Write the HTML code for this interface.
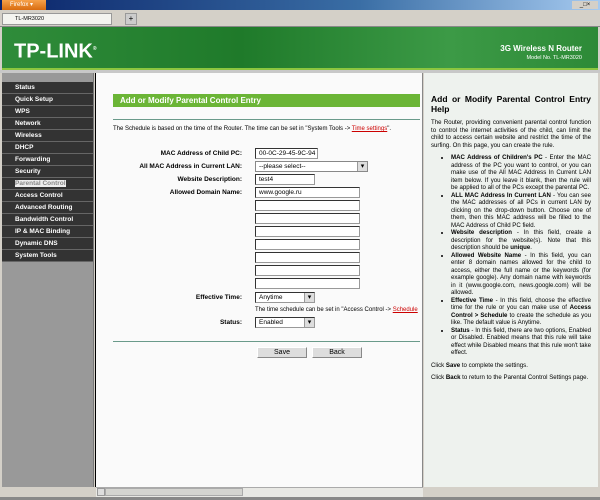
<!DOCTYPE html>
<html><head><style>
*{margin:0;padding:0;box-sizing:border-box}
body{width:600px;height:500px;overflow:hidden;position:relative;background:#d4d0c8;font-family:"Liberation Sans",Arial,sans-serif;font-size:7px;color:#000}
.a{position:absolute}
.menu div{height:12px;line-height:11px;color:#fff;font-weight:bold;font-size:6.5px;padding-left:13px;background:#333;border-bottom:1px solid #666}
.lbl{position:absolute;right:358px;font-weight:bold;font-size:6.5px;text-align:right;white-space:nowrap}
.in{position:absolute;left:255px;height:11px;background:#fff;border:1px solid #999;border-top-color:#333;border-left-color:#333;font-size:6.5px;line-height:9px;padding-left:3px}
.sel::after{content:"▾";position:absolute;right:0;top:0;width:9px;height:9px;background:#ddd;font-size:7px;text-align:center;line-height:9px;border-left:1px solid #999}
.help p{margin-bottom:5px}
.help ul{margin:0 0 5px 20px;list-style:disc}
.help li{text-align:justify}
.btn{position:absolute;top:347px;height:11px;background:#ddd;border:1px solid #888;border-top-color:#fff;border-left-color:#fff;font-size:7px;text-align:center;line-height:9px}
</style></head><body>
<div class="a" style="left:0;top:0;width:600px;height:10px;background:linear-gradient(90deg,#0a246a,#3a6ea5 60%,#a6caf0)"></div>
<div class="a" style="left:2px;top:0;width:44px;height:10px;background:linear-gradient(#f6a24a,#d86c10);color:#fff;font-size:6px;line-height:10px;padding-left:8px">Firefox ▾</div>
<div class="a" style="left:572px;top:1px;width:26px;height:8px;background:#d4d0c8;font-size:6px;line-height:8px;text-align:center">_□×</div>
<div class="a" style="left:0;top:10px;width:600px;height:17px;background:#d4d0c8;border-bottom:1px solid #888"></div>
<div class="a" style="left:2px;top:13px;width:110px;height:12px;background:#f4f4f0;border:1px solid #999;font-size:5.5px;line-height:10px;padding-left:12px">TL-MR3020</div>
<div class="a" style="left:125px;top:13px;width:12px;height:12px;background:#ccc;border:1px solid #999;font-size:8px;line-height:10px;text-align:center">+</div>
<div class="a" style="left:2px;top:27px;width:596px;height:43px;background:linear-gradient(90deg,#2f8c3a,#1f7a2a 40%,#3c9a46 75%,#2d8a37);border-bottom:2px solid #8cc63f"></div>
<div class="a" style="left:14px;top:38px;color:#fff;font-size:20px;font-weight:bold;letter-spacing:0;line-height:22px">TP-LINK<sup style="font-size:5px">®</sup></div>
<div class="a" style="left:460px;top:44px;width:122px;text-align:right;color:#fff;font-size:8px;font-weight:bold">3G Wireless N Router</div>
<div class="a" style="left:460px;top:55px;width:122px;text-align:right;color:#fff;font-size:5.5px">Model No. TL-MR3020</div>
<div class="a" style="left:0;top:70px;width:600px;height:3px;background:#c8c8c8"></div>
<div class="a" style="left:2px;top:73px;width:92px;height:414px;background:#999;border-right:1px solid #777"></div>
<div class="a menu" style="left:2px;top:82px;width:91px">
<div>Status</div><div>Quick Setup</div><div>WPS</div><div>Network</div><div>Wireless</div><div>DHCP</div><div>Forwarding</div><div>Security</div><div style="color:#999"><span style="background:#eee;color:#888">Parental Control</span></div><div>Access Control</div><div>Advanced Routing</div><div>Bandwidth Control</div><div>IP &amp; MAC Binding</div><div>Dynamic DNS</div><div>System Tools</div>
</div>
<div class="a" style="left:95px;top:73px;width:328px;height:414px;background:#fafafa;border-left:1px solid #000;border-right:1px solid #888"></div>
<div class="a" style="left:113px;top:94px;width:307px;height:13px;background:#6bb536;color:#fff;font-weight:bold;font-size:8px;line-height:13px;padding-left:7px">Add or Modify Parental Control Entry</div>
<div class="a" style="left:113px;top:119px;width:307px;height:1px;background:#6a9a8a"></div>
<div class="a" style="left:113px;top:126px;font-size:6px;white-space:nowrap">The Schedule is based on the time of the Router. The time can be set in "System Tools -&gt; <span style="color:#c00;text-decoration:underline">Time settings</span>".</div>
<div class="lbl" style="top:150px">MAC Address of Child PC:</div>
<div class="lbl" style="top:163px">All MAC Address in Current LAN:</div>
<div class="lbl" style="top:176px">Website Description:</div>
<div class="lbl" style="top:189px">Allowed Domain Name:</div>
<div class="in" style="top:148px;width:63px">00-0C-29-45-9C-94</div>
<div class="in sel" style="top:161px;width:113px;border-color:#888">--please select--</div>
<div class="in" style="top:174px;width:60px">test4</div>
<div class="in" style="top:187px;width:105px">www.google.ru</div>
<div class="in" style="top:200px;width:105px"></div>
<div class="in" style="top:213px;width:105px"></div>
<div class="in" style="top:226px;width:105px"></div>
<div class="in" style="top:239px;width:105px"></div>
<div class="in" style="top:252px;width:105px"></div>
<div class="in" style="top:265px;width:105px"></div>
<div class="in" style="top:278px;width:105px"></div>
<div class="lbl" style="top:294px">Effective Time:</div>
<div class="in sel" style="top:292px;width:60px">Anytime</div>
<div class="a" style="left:255px;top:306px;font-size:6px;line-height:8px;white-space:nowrap;width:167px;overflow:hidden">The time schedule can be set in "Access Control -&gt; <span style="color:#c00;text-decoration:underline">Schedule</span></div>
<div class="lbl" style="top:319px">Status:</div>
<div class="in sel" style="top:317px;width:60px">Enabled</div>
<div class="a" style="left:113px;top:341px;width:307px;height:1px;background:#6a9a8a"></div>
<div class="btn" style="left:257px;width:50px">Save</div>
<div class="btn" style="left:312px;width:50px">Back</div>
<div class="a" style="left:424px;top:73px;width:174px;height:414px;background:#eef2ee"></div>
<div class="a help" style="left:431px;top:94px;width:160px;font-size:6.1px;line-height:7.5px">
<div style="font-size:8.5px;font-weight:bold;line-height:10px;margin-bottom:5px;text-align:justify">Add or Modify Parental Control Entry Help</div>
<p style="text-align:justify">The Router, providing convenient parental control function to control the internet activities of the child, can limit the child to access certain website and restrict the time of the surfing. On this page, you can create the rule.</p>
<ul>
<li><b>MAC Address of Children's PC</b> - Enter the MAC address of the PC you want to control, or you can make use of the All MAC Address In Current LAN item below. If you leave it blank, then the rule will be applied to all of the PCs except the parental PC.</li>
<li><b>ALL MAC Address In Current LAN</b> - You can see the MAC addresses of all PCs in current LAN by clicking on the drop-down button. Choose one of them, then this MAC address will be filled to the MAC Address of Child PC field.</li>
<li><b>Website description</b> - In this field, create a description for the website(s). Note that this description should be <b>unique</b>.</li>
<li><b>Allowed Website Name</b> - In this field, you can enter 8 domain names allowed for the child to access, either the full name or the keywords (for example google). Any domain name with keywords in it (www.google.com, news.google.com) will be allowed.</li>
<li><b>Effective Time</b> - In this field, choose the effective time for the rule or you can make use of <b>Access Control &gt; Schedule</b> to create the schedule as you like. The default value is Anytime.</li>
<li><b>Status</b> - In this field, there are two options, Enabled or Disabled. Enabled means that this rule will take effect while Disabled means that this rule won't take effect.</li>
</ul>
<p>Click <b>Save</b> to complete the settings.</p>
<p>Click <b>Back</b> to return to the Parental Control Settings page.</p>
</div>
<div class="a" style="left:96px;top:487px;width:327px;height:10px;background:#e8e8e4;border-top:1px solid #aaa"></div>
<div class="a" style="left:97px;top:488px;width:8px;height:8px;background:#ddd;border:1px solid #999"></div>
<div class="a" style="left:105px;top:488px;width:138px;height:8px;background:#d4d4d0;border:1px solid #aaa"></div>
<div class="a" style="left:0;top:497px;width:600px;height:3px;background:#888"></div>
</body></html>
